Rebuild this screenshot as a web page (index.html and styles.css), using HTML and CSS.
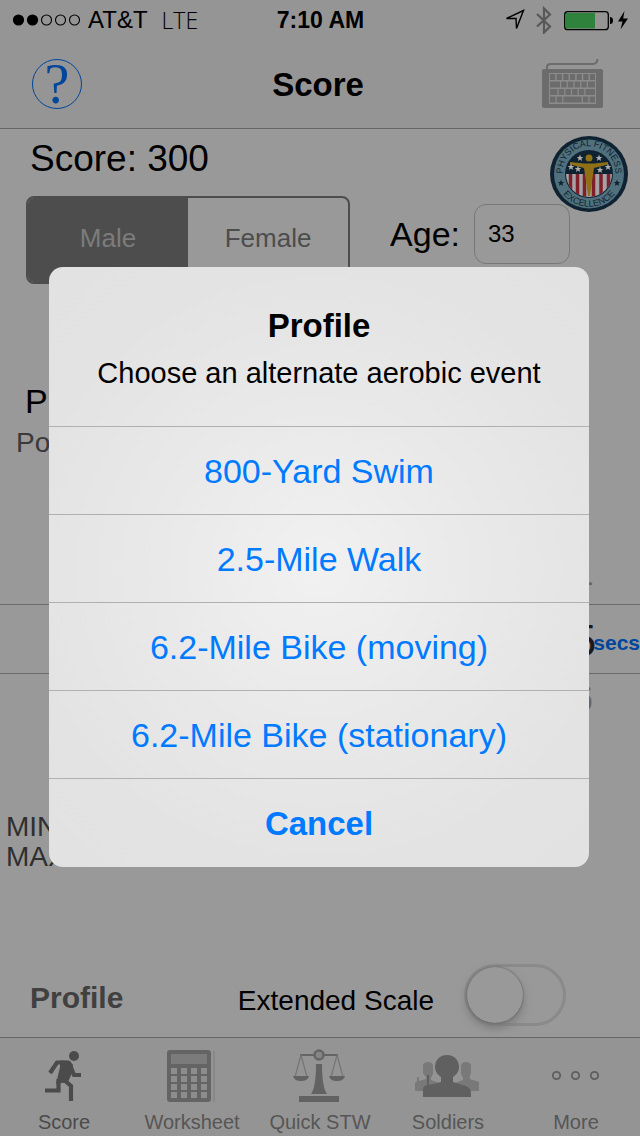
FILE: index.html
```html
<!DOCTYPE html>
<html lang="en">
<head>
<meta charset="utf-8">
<meta name="viewport" content="width=device-width, initial-scale=1">
<title>Score</title>
<link rel="stylesheet" href="styles.css">
</head>
<body>
<div class="screen">
  <header class="top">
    <div class="status">
      <div class="status-left">
        <svg width="69" height="14" viewBox="0 0 69 14" aria-hidden="true">
          <g stroke="#000" stroke-width="1.2"><circle cx="6.5" cy="7" r="5"/><circle cx="20.5" cy="7" r="5"/></g>
          <g fill="none" stroke="#000" stroke-width="1.1"><circle cx="34.5" cy="7" r="5"/><circle cx="48.5" cy="7" r="5"/><circle cx="62.5" cy="7" r="5"/></g>
        </svg>
        <span class="carrier">AT&amp;T</span>
        <span class="network">LTE</span>
      </div>
      <span class="time">7:10 AM</span>
      <div class="status-right">
        <svg width="124" height="28" viewBox="0 0 124 28" aria-hidden="true">
          <path d="M1.500 12.500 18.500 4.500 11.500 22.500 11 12.500Z" fill="none" stroke="#000" stroke-width="1.400"/>
          <path d="M32 8 45 20.500 39 26.500V2.500L45 8.500 32 20.500" fill="none" stroke="#585858" stroke-width="2.200"/>
          <rect x="59.700" y="5.700" width="43.600" height="18" rx="3" fill="none" stroke="#000" stroke-width="1.300"/>
          <rect x="61" y="7" width="29" height="15.500" fill="#2f823c"/>
          <path d="M105 11q3 0 3 3.500t-3 3.500Z"/>
          <path d="M119.500 5 113 15.500h4.500L115.500 23.500 123 12.500h-4.800Z"/>
        </svg>
      </div>
    </div>
    <div class="nav">
      <button class="help" type="button" aria-label="Help">?</button>
      <h1 class="nav-title">Score</h1>
      <button class="keyboard" type="button" aria-label="Keyboard">
        <svg width="62" height="50" viewBox="0 0 62 50" aria-hidden="true">
          <path d="M5 11V8Q5 5 9 5H51Q55 5 55.500 0" fill="none" stroke="#6c6c6c" stroke-width="2"/>
          <rect x="0" y="10" width="61" height="39" rx="2" fill="#6c6c6c"/>
          <rect x="7" y="14" width="47" height="31" fill="#8c8c8c"/>
          <g fill="none" stroke="#6c6c6c" stroke-width="6">
            <path d="M8 18H53" stroke-dasharray="5.200 1.460"/>
            <path d="M8 25.500H53" stroke-dasharray="10 1.200 5.500 1.200 5.500 1.200 5.500 1.200 5.500 1.200 8"/>
            <path d="M8 33H53" stroke-dasharray="7.500 1.200 5.500 1.200 5.500 1.200 5.500 1.200 5.500 1.200 10"/>
            <path d="M8 40.500H53" stroke-dasharray="5.500 1.200 5.500 1.200 18.300 1.200 5.500 1.200 5.500"/>
          </g>
        </svg>
      </button>
    </div>
  </header>

  <main class="content">
    <p class="score">Score: 300</p>
    <svg class="badge" width="78" height="76" viewBox="0 0 78 76" role="img" aria-label="Physical fitness badge">
      <defs>
        <clipPath id="disc"><circle cx="39" cy="38" r="23"/></clipPath>
        <path id="arc-top" d="M14.500 46A26.300 26.300 0 1 1 63.500 46"/>
        <path id="arc-bottom" d="M7 45A32.800 32.800 0 0 0 71 45"/>
        <path id="star" d="M0-3.400.9-1.100 3.300-1 1.400.5 2.100 2.900 0 1.500-2.100 2.900-1.400.5-3.300-1-.9-1.100Z"/>
      </defs>
      <ellipse cx="39" cy="38" rx="39" ry="38" fill="#0f2231"/>
      <ellipse cx="39" cy="38" rx="35" ry="34.500" fill="#4f707c"/>
      <circle cx="39" cy="38" r="24" fill="#0f2231"/>
      <g clip-path="url(#disc)">
        <rect x="15" y="38" width="48" height="24" fill="#a5a3a5"/>
        <path d="M20.500 38v24M27.500 38v24M34.500 38v24M43.500 38v24M51 38v24M58.500 38v24" stroke="#7f1f29" stroke-width="3.500"/>
      </g>
      <circle cx="39" cy="22" r="3.500" fill="#8f7016"/>
      <path d="M20 26 34 27.500h10L58 26v2.500L44 32 42.500 42 40 60h-2L35.500 42 34 32 20 28.500Z" fill="#8f7016"/>
      <g fill="#b0b0b0">
        <use href="#star" x="30" y="22"/><use href="#star" x="49" y="22"/><use href="#star" x="21" y="31"/>
        <use href="#star" x="28" y="33"/><use href="#star" x="50" y="34"/><use href="#star" x="58" y="31"/>
      </g>
      <g fill="#0f2231">
        <use href="#star" x="11" y="47"/><use href="#star" x="67" y="47"/>
        <text class="badge-text"><textPath href="#arc-top" startOffset="50%" text-anchor="middle">PHYSICAL FITNESS</textPath></text>
        <text class="badge-text"><textPath href="#arc-bottom" startOffset="50%" text-anchor="middle">EXCELLENCE</textPath></text>
      </g>
    </svg>
    <div class="person">
      <div class="segments" role="group" aria-label="Gender">
        <button class="segment selected" type="button" aria-pressed="true">Male</button>
        <button class="segment" type="button" aria-pressed="false">Female</button>
      </div>
      <label class="age-label" for="age">Age:</label>
      <input class="age" id="age" type="text" value="33">
    </div>
    <div class="event">
      <p class="event-name">P</p>
      <p class="event-points">Po</p>
    </div>
    <div class="picker">
      <div class="wheel-row">4</div>
      <div class="wheel-row current">5<span class="unit">secs</span></div>
      <div class="wheel-row">6</div>
    </div>
    <div class="limits">
      <p>MIN</p>
      <p>MAX</p>
    </div>
    <div class="options">
      <button class="profile" type="button">Profile</button>
      <label class="scale-label" for="scale">Extended Scale</label>
      <input class="switch" id="scale" type="checkbox" role="switch">
    </div>
  </main>

  <nav class="tabs">
    <a class="tab active" href="#score">
      <svg width="70" height="54" viewBox="0 0 70 54" aria-hidden="true">
        <circle cx="45" cy="7" r="5" fill="#4b4b4b"/>
        <path d="M31 11.500 41 12 44 16 43 24 39 33 27 35 31 18Z" fill="#4b4b4b"/>
        <path d="M21 24 28 13.500H40M41 16 45 26H52M29.500 30V41.500H16M34 30 42 37V52" fill="none" stroke="#4b4b4b" stroke-width="4.200"/>
      </svg>
      <span>Score</span>
    </a>
    <a class="tab" href="#worksheet">
      <svg width="70" height="54" viewBox="0 0 70 54" aria-hidden="true">
        <path d="M57 2V53" stroke="#888" stroke-width="2"/>
        <rect x="10" y="1" width="44" height="52" rx="3" fill="#646464"/>
        <rect x="14" y="5" width="36" height="10" fill="#7b7b7b"/>
        <path d="M14 22H50M14 30H50M14 38H50M14 46H50" stroke="#8d8d8d" stroke-width="6" stroke-dasharray="6 4"/>
      </svg>
      <span>Worksheet</span>
    </a>
    <a class="tab" href="#quick">
      <svg width="70" height="54" viewBox="0 0 70 54" aria-hidden="true">
        <g fill="none" stroke="#656565">
          <path d="M15 6H53" stroke-width="2"/>
          <path d="M16 6 10 28M16 6 22 28M52 6 46 28M52 6 58 28" stroke="#757575" stroke-width="1.200"/>
        </g>
        <circle cx="34" cy="6" r="4.500" fill="#858585" stroke="#656565" stroke-width="2.500"/>
        <path d="M8 27H24Q23 32 16 32T8 27ZM44 27H60Q59 32 52 32T44 27ZM31 15H37Q37 38 42 45H26Q31 38 31 15ZM14 47H54V53H14Z" fill="#626262"/>
      </svg>
      <span>Quick STW</span>
    </a>
    <a class="tab" href="#soldiers">
      <svg width="70" height="54" viewBox="0 0 70 54" aria-hidden="true">
        <path d="M10 16Q11 13 15 13T20 16V25L18 29V31L26 34V42H2V34L4 32V28H6V32L13 30V28L10 24ZM58 16Q57 13 53 13T48 16V25L50 29V31L42 34V42H66V33L57 30V27L58 24Z" fill="#797979"/>
        <path d="M34 6C42 6 46 12 46 18C46 23 43 26 40 28V33L53 37Q58 39 58 44V48H10V40Q10 37 14 36V26H16V36L28 33V28C25 26 22 23 22 18C22 12 26 6 34 6Z" fill="#606060"/>
      </svg>
      <span>Soldiers</span>
    </a>
    <a class="tab" href="#more">
      <svg width="70" height="54" viewBox="0 0 70 54" aria-hidden="true">
        <g fill="none" stroke="#5e5e5e" stroke-width="1.800"><circle cx="15.500" cy="26.500" r="3.700"/><circle cx="34.500" cy="26.500" r="3.700"/><circle cx="53.500" cy="26.500" r="3.700"/></g>
      </svg>
      <span>More</span>
    </a>
  </nav>

  <div class="overlay">
    <section class="alert" role="dialog" aria-labelledby="alert-title" aria-describedby="alert-message">
      <div class="alert-head">
        <h2 class="alert-title" id="alert-title">Profile</h2>
        <p class="alert-message" id="alert-message">Choose an alternate aerobic event</p>
      </div>
      <button class="choice" type="button">800-Yard Swim</button>
      <button class="choice" type="button">2.5-Mile Walk</button>
      <button class="choice" type="button">6.2-Mile Bike (moving)</button>
      <button class="choice" type="button">6.2-Mile Bike (stationary)</button>
      <button class="choice cancel" type="button">Cancel</button>
    </section>
  </div>
</div>
</body>
</html>
```

FILE: styles.css
```css
* {
  box-sizing: border-box;
}

body,
h1,
h2,
p {
  margin: 0;
}

body {
  font-family: "Liberation Sans", Arial, sans-serif;
  color: #000;
  background: #999;
}

button,
input {
  font-family: inherit;
  margin: 0;
}

button {
  padding: 0;
  border: 0;
  background: none;
}

svg {
  display: block;
}

.screen {
  position: relative;
  display: flex;
  flex-direction: column;
  min-height: 100vh;
  overflow: hidden;
}

/* Status bar and navigation */
.top {
  background: #959595;
  border-bottom: 1px solid #666;
}

.status {
  display: grid;
  grid-template-columns: 1fr auto 1fr;
  align-items: center;
  height: 40px;
  padding: 0 11px 0 12px;
  font-size: 24px;
  line-height: 28px;
}

.status-left {
  display: flex;
  align-items: center;
}

.carrier {
  margin-left: 7px;
}

.network {
  margin-left: 14px;
  font-family: "Open Sans", "Liberation Sans", sans-serif;
  font-size: 23px;
  font-weight: 300;
}

.time {
  font-size: 23px;
  font-weight: bold;
}

.status-right {
  justify-self: end;
}

.nav {
  display: grid;
  grid-template-columns: 1fr auto 1fr;
  align-items: center;
  height: 88px;
  padding: 0 36px 0 32px;
}

.help {
  width: 50px;
  height: 50px;
  border: 1px solid #00469b;
  border-radius: 50%;
  color: #00469b;
  font-family: "Liberation Serif", serif;
  font-size: 56px;
  line-height: 48px;
}

.nav-title {
  padding-top: 2px;
  font-size: 33px;
  line-height: 40px;
}

.keyboard {
  justify-self: end;
}

/* Content */
.content {
  position: relative;
  flex: 1;
  display: flex;
  flex-direction: column;
}

.score {
  padding: 10px 30px 17px;
  font-size: 37px;
  line-height: 40px;
}

.badge {
  position: absolute;
  top: 7px;
  right: 12px;
}

.badge-text {
  font: 9px "Liberation Sans", Arial, sans-serif;
}

.person {
  display: flex;
  align-items: flex-start;
  padding: 0 70px 0 26px;
}

.segments {
  flex: 1;
  display: flex;
  border: 2px solid #4d4d4d;
  border-radius: 8px;
  overflow: hidden;
}

.segment {
  flex: 1;
  height: 84px;
  padding-bottom: 4px;
  color: #4d4d4d;
  font-size: 26px;
}

.segment.selected {
  background: #4d4d4d;
  color: #7c7c7c;
}

.age-label {
  margin: 18px 14px 0 40px;
  font-size: 34px;
  line-height: 40px;
}

.age {
  width: 96px;
  height: 60px;
  margin-top: 8px;
  padding: 0 13px;
  border: 1px solid #777;
  border-radius: 12px;
  background: none;
  font-size: 24px;
}

.event {
  padding: 95px 16px 0;
}

.event-name {
  padding-left: 9px;
  font-size: 34px;
  line-height: 44px;
}

.event-points {
  color: #3a3a3a;
  font-size: 28px;
  line-height: 40px;
}

.picker {
  padding-top: 91px;
  color: #666;
  font-size: 36px;
}

.wheel-row {
  height: 50px;
  padding-right: 47px;
  line-height: 50px;
  text-align: right;
}

.wheel-row.current {
  display: flex;
  align-items: center;
  justify-content: flex-end;
  height: 70px;
  padding: 4px 0 0;
  border: solid #6b6b6b;
  border-width: 1px 0;
  color: #1a1a1a;
  font-size: 45px;
}

.unit {
  margin-left: -3px;
  padding-top: 4px;
  color: #00469b;
  font-size: 21px;
  font-weight: bold;
}

.limits {
  padding: 88px 6px 0;
  color: #2f2f2f;
  font-size: 28px;
  line-height: 30px;
}

.options {
  display: flex;
  align-items: center;
  margin-top: auto;
  padding: 0 74px 11px 30px;
}

.profile {
  padding-top: 6px;
  color: #404040;
  font-size: 30px;
  font-weight: bold;
}

.scale-label {
  margin: 12px 30px 0 auto;
  font-size: 28px;
  line-height: 34px;
}

.switch {
  appearance: none;
  display: flex;
  width: 102px;
  height: 62px;
  border: 3px solid #8a8a8a;
  border-radius: 31px;
}

.switch::before {
  content: "";
  width: 56px;
  height: 56px;
  border-radius: 50%;
  background: #999;
  box-shadow: 0 0 2px #555, 0 5px 10px #777;
}

/* Tab bar */
.tabs {
  display: grid;
  grid-template-columns: repeat(5, 1fr);
  height: 99px;
  padding-top: 11px;
  border-top: 1px solid #666;
  background: #949494;
}

.tab {
  display: flex;
  flex-direction: column;
  align-items: center;
  gap: 7px;
  color: #565656;
  font-size: 20px;
  line-height: 24px;
  text-decoration: none;
}

.tab.active {
  color: #4b4b4b;
}

/* Alert */
.overlay {
  position: absolute;
  inset: 0;
  display: grid;
  align-items: center;
  padding: 0 51px 2px 49px;
}

.alert {
  overflow: hidden;
  border-radius: 14px;
  background: radial-gradient(circle at 50% 50%, #f1f1f1 0, #e9e9e9 160px, #e3e3e3 300px, #e2e2e2 100%);
}

.alert-head {
  padding: 38px 20px 36px;
  text-align: center;
}

.alert-title {
  font-size: 33px;
  line-height: 42px;
}

.alert-message {
  padding-top: 9px;
  font-size: 29px;
  line-height: 34px;
}

.choice {
  display: block;
  width: 100%;
  height: 88px;
  padding-top: 2px;
  border-top: 1px solid #b0b0b0;
  color: #007aff;
  font-size: 34px;
}

.cancel {
  height: 89px;
  font-size: 33px;
  font-weight: bold;
}
```
